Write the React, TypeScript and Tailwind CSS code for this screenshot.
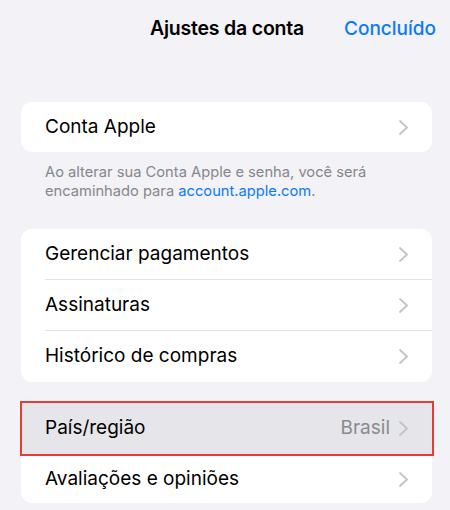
import React from "react";

const font = { fontFamily: "Inter, 'Noto Sans', 'Liberation Sans', sans-serif" };

function Chevron() {
  return (
    <svg width="9" height="15" viewBox="0 0 9 15" fill="none" className="shrink-0">
      <path d="M1 1 L8 7.5 L1 14" stroke="#c4c4c7" strokeWidth="1.8" strokeLinecap="round" strokeLinejoin="round" />
    </svg>
  );
}

function Row({
  label,
  value,
  divider,
  h = "h-[51px]",
}: {
  label: string;
  value?: string;
  divider?: boolean;
  h?: string;
}) {
  return (
    <div className={`flex ${h} items-center pl-6`}>
      <div className={`flex h-full flex-1 items-center pr-6 ${divider ? "border-b border-[#e3e3e6]" : ""}`}>
        <span className="flex-1 text-[19px] text-black">{label}</span>
        {value && <span className="mr-[9px] text-[19px] text-[#8a8a8e]">{value}</span>}
        <Chevron />
      </div>
    </div>
  );
}

export default function App() {
  return (
    <div className="h-[510px] w-[450px] overflow-hidden bg-[#f2f2f7]" style={font}>
      {/* nav bar */}
      <div className="relative flex h-[58px] items-center justify-end pr-[14px]">
        <h1 className="absolute left-0 right-0 pl-[4px] text-center text-[19.5px] font-semibold tracking-[-0.2px] text-black">
          Ajustes da conta
        </h1>
        <button className="relative text-[19px] font-medium text-[#0a7aff]">Concluído</button>
      </div>

      <div className="pl-[21px] pr-[18px]">
        <div className="mt-[44px] overflow-hidden rounded-[11px] bg-white">
          <Row label="Conta Apple" h="h-[50px]" />
        </div>
        <p className="mt-[11px] px-6 text-[14.7px] leading-[19px] text-[#86868b]">
          Ao alterar sua Conta Apple e senha, você será encaminhado para{" "}
          <span className="text-[#0a7aff]">account.apple.com</span>.
        </p>

        <div className="mt-[28px] overflow-hidden rounded-[11px] bg-white">
          <Row label="Gerenciar pagamentos" divider />
          <Row label="Assinaturas" divider />
          <Row label="Histórico de compras" />
        </div>

        <div className="mt-[20px] rounded-[11px] bg-white">
          <div className="relative bg-[#e5e5ea]">
            <Row label="País/região" value="Brasil" h="h-[53px]" />
            <div className="pointer-events-none absolute -top-[1px] -bottom-[1px] -left-[1px] -right-[2px] border-2 border-[#ea3a35]" />
          </div>
          <Row label="Avaliações e opiniões" h="h-[48px]" />
        </div>
      </div>
    </div>
  );
}
